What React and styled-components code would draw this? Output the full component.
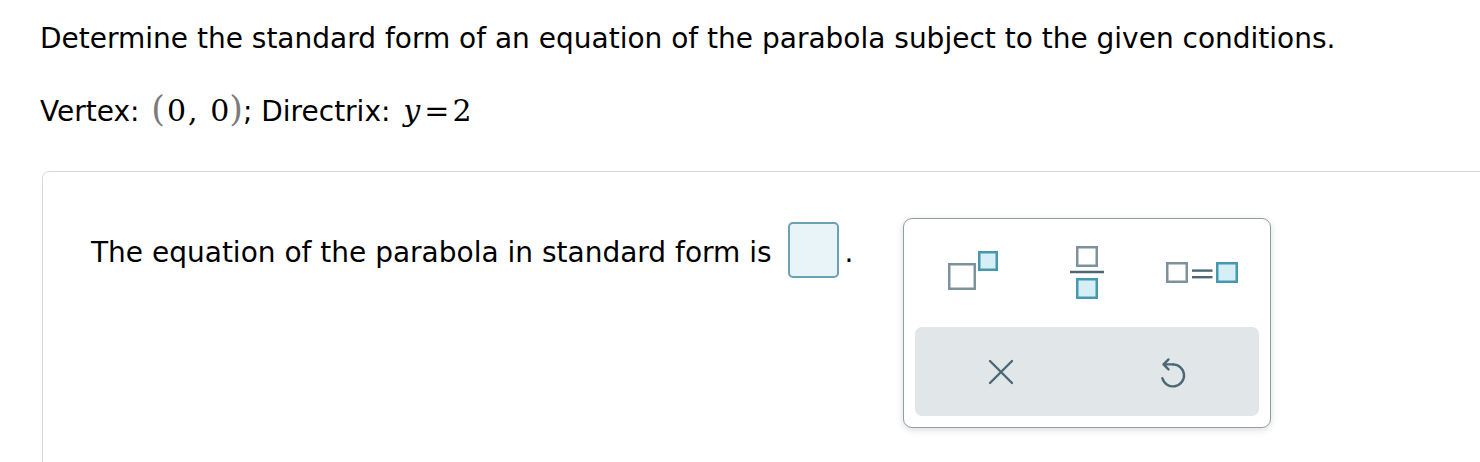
import styled, { createGlobalStyle } from "styled-components";

const GlobalStyle = createGlobalStyle`
  html, body {
    margin: 0;
    padding: 0;
    background: #ffffff;
    overflow: hidden;
  }
  body {
    font-family: "DejaVu Sans", Verdana, sans-serif;
    color: #000000;
  }
`

const Page = styled.div`
  padding: 23px 0 0 40px;
  width: 1480px;
  height: 462px;
  box-sizing: border-box;
`

const Prompt = styled.p`
  margin: 0;
  font-size: 28px;
  line-height: 32px;
`

const Given = styled(Prompt)`
  margin-top: 38px;
`

const MathText = styled.span`
  font-family: "DejaVu Serif", "Times New Roman", serif;
  font-size: 30px;
  line-height: 32px;
  font-style: ${(props) => (props.italic ? "italic" : "normal")};
  margin-left: ${(props) => props.lead || "0px"};
`

const Paren = styled.span`
  color: #7b7b7b;
  font-size: 35px;
  margin: ${(props) => (props.open ? "0 2px 0 3px" : "0")};
`

const Digit = styled.span`
  margin-left: ${(props) => props.lead || "0px"};
`

const Comma = styled.span`
  margin-left: 2px;
`

const Operator = styled.span`
  margin: 0 3px 0 4px;
`

const Panel = styled.div`
  margin: 43px 0 0 2px;
  width: 1500px;
  height: 320px;
  border: 1px solid #d4d9dc;
  border-radius: 7px 0 0 0;
  padding: 46px 0 0 48px;
  box-sizing: border-box;
`

const Row = styled.div`
  display: flex;
  align-items: flex-start;
`

const AnswerLine = styled.div`
  display: flex;
  align-items: flex-start;
  margin-top: 4px;
`

const Statement = styled.span`
  font-size: 28px;
  line-height: 32px;
  margin-top: 15px;
  white-space: nowrap;
`

const AnswerBox = styled.div`
  width: 51px;
  height: 56px;
  margin-left: 16px;
  box-sizing: border-box;
  border: 2px solid #6aa2b1;
  border-radius: 5px;
  background: #e8f4f7;
`

const Period = styled(Statement)`
  margin-left: 6px;
`

const Palette = styled.div`
  margin-left: 50px;
  width: 368px;
  height: 210px;
  box-sizing: border-box;
  border: 1.5px solid #8c9fa7;
  border-radius: 9px;
  background: #ffffff;
  box-shadow: 0 2px 7px rgba(0, 0, 0, 0.14);
  display: flex;
  flex-direction: column;
`

const TemplateRow = styled.div`
  height: 108px;
  padding: 0 11px;
  display: grid;
  grid-template-columns: repeat(3, 1fr);
  align-items: center;
  justify-items: center;
`

const ActionRow = styled.div`
  margin: 0 11px 11px;
  height: 89px;
  border-radius: 7px;
  background: #e1e6e9;
  display: grid;
  grid-template-columns: repeat(2, 1fr);
  align-items: center;
  justify-items: center;
`

const IconButton = styled.div`
  display: flex;
  align-items: center;
  justify-content: center;
  margin-top: ${(props) => props.offset || "0px"};
`

const GREY = "#7c939c"
const TEAL = "#4598ae"
const TEAL_FILL = "#d6eef5"
const DARK = "#4b6874"

function SuperscriptIcon() {
  return (
    <svg width="54" height="44" viewBox="0 0 54 44">
      <rect x="3.25" y="15.25" width="25.5" height="24.5" fill="none" stroke={GREY} strokeWidth="2.5" />
      <rect x="33.25" y="3.25" width="17.5" height="17.5" fill={TEAL_FILL} stroke={TEAL} strokeWidth="2.5" />
    </svg>
  )
}

function FractionIcon() {
  return (
    <svg width="38" height="57" viewBox="0 0 38 57">
      <rect x="9.25" y="3.25" width="19.5" height="18.5" fill="none" stroke={GREY} strokeWidth="2.5" />
      <line x1="2" y1="28" x2="36" y2="28" stroke={DARK} strokeWidth="2.5" />
      <rect x="9.25" y="35.25" width="19.5" height="18.5" fill={TEAL_FILL} stroke={TEAL} strokeWidth="2.5" />
    </svg>
  )
}

function EqualsIcon() {
  return (
    <svg width="76" height="25" viewBox="0 0 76 25">
      <rect x="3.25" y="3.25" width="19.5" height="18.5" fill="none" stroke={GREY} strokeWidth="2.5" />
      <line x1="28" y1="10.6" x2="48.5" y2="10.6" stroke={DARK} strokeWidth="2.4" />
      <line x1="28" y1="17.2" x2="48.5" y2="17.2" stroke={DARK} strokeWidth="2.4" />
      <rect x="53.25" y="3.25" width="19.5" height="18.5" fill={TEAL_FILL} stroke={TEAL} strokeWidth="2.5" />
    </svg>
  )
}

function ClearIcon() {
  return (
    <svg width="28" height="28" viewBox="0 0 28 28">
      <path d="M3 3 L25 25 M25 3 L3 25" stroke={DARK} strokeWidth="2.4" strokeLinecap="round" fill="none" />
    </svg>
  )
}

function UndoIcon() {
  return (
    <svg width="30" height="36" viewBox="0 0 30 36">
      <path
        d="M15 10.4 A11 11 0 1 1 4.4 24.2"
        stroke={DARK}
        strokeWidth="2.4"
        strokeLinecap="round"
        fill="none"
      />
      <path
        d="M15 10.4 H5.5 M10.5 5.4 L5.5 10.4 L10.5 15.4"
        stroke={DARK}
        strokeWidth="2.4"
        strokeLinecap="round"
        strokeLinejoin="round"
        fill="none"
      />
    </svg>
  )
}

export default function App() {
  return (
    <Page>
      <GlobalStyle />
      <Prompt>
        Determine the standard form of an equation of the parabola subject to the given conditions.
      </Prompt>
      <Given>
        Vertex:{" "}
        <MathText>
          <Paren open>(</Paren>
          <Digit>0</Digit>
          <Comma>,</Comma> <Digit lead="3px">0</Digit>
          <Paren>)</Paren>
        </MathText>
        ; Directrix:{" "}
        <MathText italic lead="4px">y</MathText>
        <MathText>
          <Operator>=</Operator>2
        </MathText>
      </Given>
      <Panel>
        <Row>
          <AnswerLine>
            <Statement>The equation of the parabola in standard form is</Statement>
            <AnswerBox />
            <Period>.</Period>
          </AnswerLine>
          <Palette>
            <TemplateRow>
              <IconButton offset="-4px"><SuperscriptIcon /></IconButton>
              <IconButton offset="-2px"><FractionIcon /></IconButton>
              <IconButton offset="-1px"><EqualsIcon /></IconButton>
            </TemplateRow>
            <ActionRow>
              <IconButton><ClearIcon /></IconButton>
              <IconButton><UndoIcon /></IconButton>
            </ActionRow>
          </Palette>
        </Row>
      </Panel>
    </Page>
  )
}
